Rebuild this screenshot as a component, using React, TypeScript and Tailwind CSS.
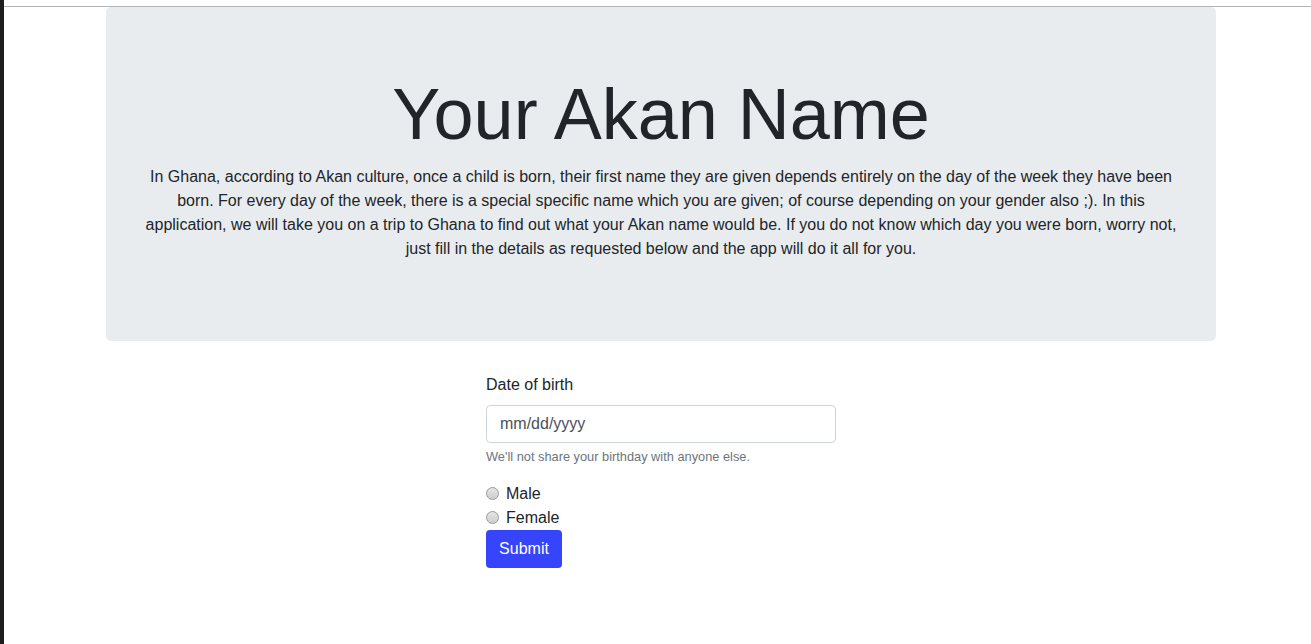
import React from "react";

const App = () => {
  return (
    <div
      className="flex min-h-[644px] bg-white text-[#212529]"
      style={{ fontFamily: '"Liberation Sans", Arial, sans-serif' }}
    >
      <div className="w-[4px] shrink-0 bg-[#1e1e1e]" />
      <div className="flex-1">
        <div className="h-[6px]" />
        <div className="h-px bg-[#b4b4b4]" />
        <div className="pl-[102px]">
          <div className="w-[1110px] rounded-[5px] bg-[#e9ecef] px-8 pt-16 pb-16 mb-8 text-center">
            <h1 className="text-[72px] leading-[1.2] mb-2">Your Akan Name</h1>
            <p className="text-base leading-6 mb-4">
              In Ghana, according to Akan culture, once a child is born, their first name they are given depends entirely on the day of the week they have been born. For every day of the week, there is a special specific name which you are given; of course depending on your gender also ;). In this application, we will take you on a trip to Ghana to find out what your Akan name would be. If you do not know which day you were born, worry not, just fill in the details as requested below and the app will do it all for you.
            </p>
          </div>
          <form className="ml-[380px] w-[350px]">
            <div className="mb-[15px]">
              <label className="block text-base leading-6 mb-2">Date of birth</label>
              <input
                type="text"
                placeholder="mm/dd/yyyy"
                className="block w-full h-[38px] rounded-[4px] border border-[#ced4da] bg-white pl-[13px] pr-3 text-base text-[#495057] placeholder:text-[#495057] outline-none"
              />
              <small className="block mt-1 text-[12.8px] leading-[19.2px] text-[#6c757d]">
                We'll not share your birthday with anyone else.
              </small>
            </div>
            <label className="flex items-center text-base leading-6">
              <span className="w-[13px] h-[13px] rounded-full border border-[#9a9a9a] bg-gradient-to-b from-[#e4e4e4] to-[#cfcfcf] mr-[7px]" />
              Male
            </label>
            <label className="flex items-center text-base leading-6">
              <span className="w-[13px] h-[13px] rounded-full border border-[#9a9a9a] bg-gradient-to-b from-[#e4e4e4] to-[#cfcfcf] mr-[7px]" />
              Female
            </label>
            <button
              type="button"
              className="h-[38px] w-[76px] rounded-[4px] bg-[#3644fb] text-white text-base leading-6"
            >
              Submit
            </button>
          </form>
        </div>
      </div>
    </div>
  );
};

export default App;
